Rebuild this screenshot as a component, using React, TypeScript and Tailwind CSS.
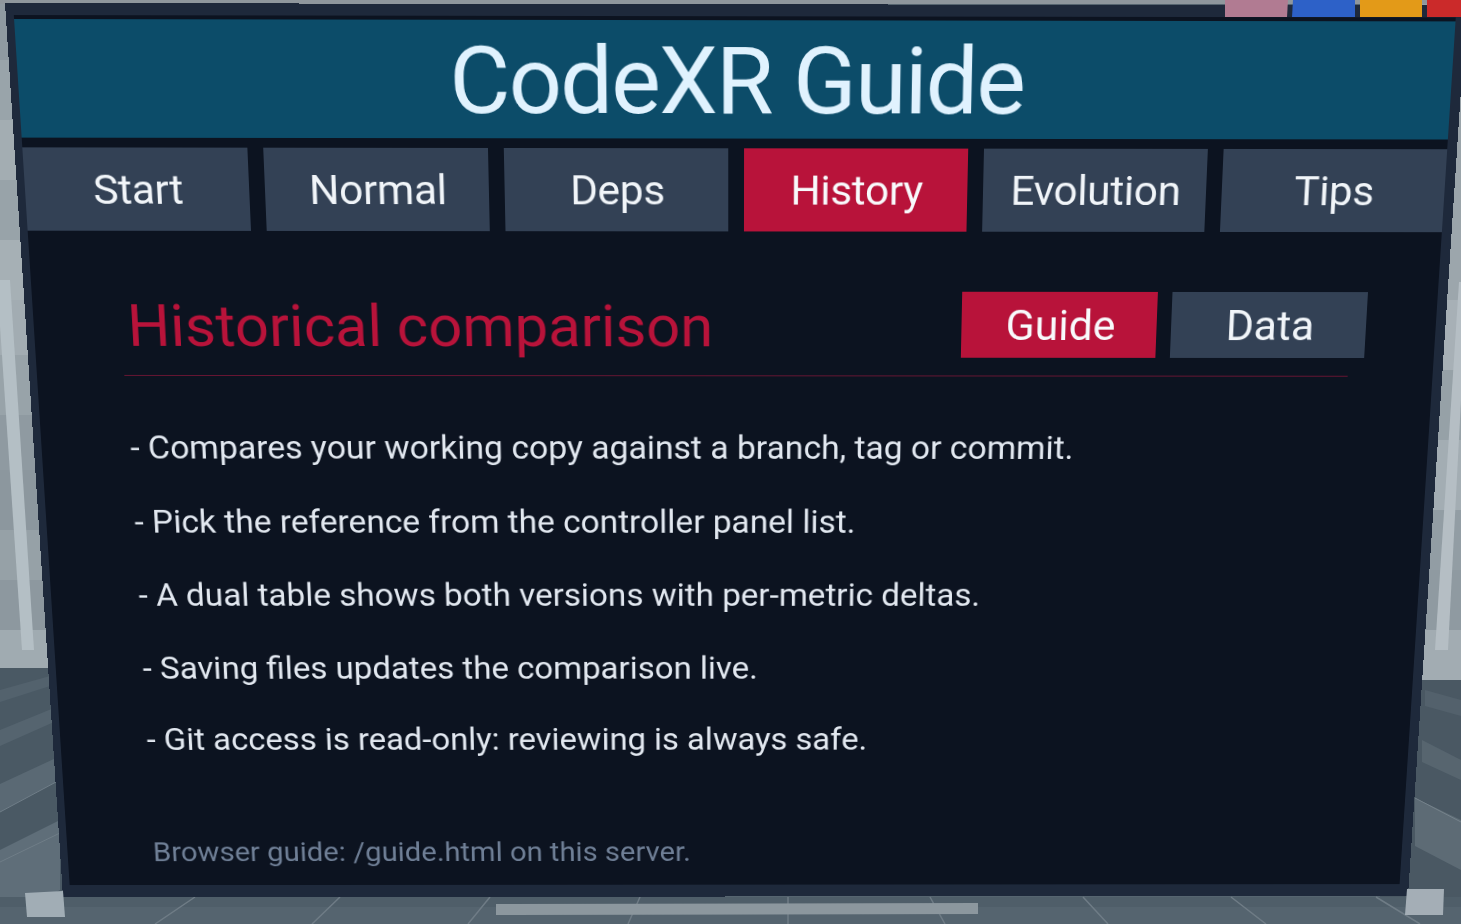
import React from "react";

const tabs = ["Start", "Normal", "Deps", "History", "Evolution", "Tips"];
const lines = [
  "- Compares your working copy against a branch, tag or commit.",
  "- Pick the reference from the controller panel list.",
  "- A dual table shows both versions with per-metric deltas.",
  "- Saving files updates the comparison live.",
  "- Git access is read-only: reviewing is always safe.",
];

function Scene() {
  const leftBands = [
    [0, 60, "#8f9aa1"], [60, 60, "#99a4aa"], [120, 60, "#a3adb2"], [180, 60, "#98a3a9"],
    [240, 60, "#a6b0b5"], [300, 55, "#a2acb2"], [355, 60, "#98a3a9"], [415, 55, "#8f9aa1"],
    [470, 60, "#8c979e"], [530, 50, "#96a1a7"], [580, 50, "#8d989f"], [630, 40, "#a0abb1"],
  ] as const;
  const rightBands = [
    [0, 110, "#98a2a8"], [110, 120, "#9aa4aa"], [230, 70, "#9ca6ac"], [300, 70, "#a7b0b6"],
    [370, 70, "#96a1a7"], [440, 70, "#a3adb3"], [510, 60, "#929da4"], [570, 60, "#8f9aa1"],
    [630, 50, "#a2acb2"],
  ] as const;
  return (
    <svg className="absolute inset-0" width="1461" height="924" viewBox="0 0 1461 924">
      <rect width="1461" height="924" fill="#566570" />
      {leftBands.map(([y, h, c]) => (
        <rect key={y} x="0" y={y} width="80" height={h} fill={c} />
      ))}
      {rightBands.map(([y, h, c]) => (
        <rect key={y} x="1380" y={y} width="81" height={h} fill={c} />
      ))}
      <rect x="0" y="0" width="1461" height="4" fill="#8f979d" />
      <polygon points="0,668 80,668 80,924 0,924" fill="#4a5964" />
      <polygon points="1380,680 1461,680 1461,924 1380,924" fill="#4a5863" />
      <polygon points="0,690 50,676 50,686 0,702" fill="#53626d" />
      <polygon points="0,730 54,708 54,722 0,746" fill="#55646f" />
      <polygon points="0,784 56,758 56,782 0,812" fill="#5a6974" />
      <polygon points="0,850 60,820 60,890 0,924" fill="#5f6e79" />
      <line x1="0" y1="812" x2="56" y2="782" stroke="#6f7d87" strokeWidth="1" />
      <line x1="0" y1="862" x2="60" y2="833" stroke="#6f7d87" strokeWidth="1" />
      <polygon points="1425,690 1461,700 1461,716 1425,706" fill="#53616c" />
      <polygon points="1422,740 1461,760 1461,780 1422,762" fill="#57656f" />
      <polygon points="1415,798 1461,820 1461,870 1415,846" fill="#5d6b75" />
      <line x1="1415" y1="798" x2="1461" y2="822" stroke="#75828b" strokeWidth="1" />
      <line x1="1405" y1="897" x2="1440" y2="924" stroke="#75828b" strokeWidth="1" />
      <polygon points="0,280 10,280 34,650 22,650 0,326" fill="#b4bfc5" />
      <polygon points="1459,282 1461,282 1461,400 1448,650 1435,650" fill="#b5bec4" />
      <rect x="0" y="897" width="1461" height="27" fill="#55646f" />
      <rect x="0" y="897" width="1461" height="10" fill="#4f5e69" />
      {[
        [195, 155], [340, 312], [490, 468], [640, 628], [788, 788], [930, 945], [1083, 1108], [1231, 1266], [1376, 1420],
      ].map(([a, b]) => (
        <line key={a} x1={a} y1="897" x2={b} y2="924" stroke="#6f7c86" strokeWidth="1.5" />
      ))}
      <polygon points="496,904 978,903 978,914 496,915" fill="#8c979e" />
    </svg>
  );
}

function Handles() {
  return (
    <svg className="absolute inset-0 pointer-events-none" width="1461" height="924" viewBox="0 0 1461 924">
      <polygon points="25,893 63,891 65,917 27,917" fill="#a1adb5" />
      <polygon points="1407,889 1444,889 1443,915 1405,915" fill="#a4aeb6" />
      <polygon points="1225,0 1288,0 1287,17 1225,17" fill="#b17b92" />
      <polygon points="1293,0 1355,0 1355,17 1292,17" fill="#2d61c8" />
      <polygon points="1360,0 1422,0 1422,17 1360,17" fill="#e39a18" />
      <polygon points="1427,0 1461,0 1461,17 1427,17" fill="#cb2a2a" />
    </svg>
  );
}

export default function App() {
  return (
    <div className="relative w-[1461px] h-[924px] overflow-hidden font-['Roboto',sans-serif]">
      <Scene />
      <div className="relative w-[1460px] h-[970px] origin-top-left [transform:matrix3d(1.00508,0.001727,0,0.000002759,0.06543,1.00191,0,0.00008948,0,0,1,0,5,3,0,1)] bg-[#0c1320] border-l-[8px] border-r-[10px] border-t-[12px] border-b-[14px] border-[#1e293b] flex flex-col">
        <div className="mt-1 h-[120px] bg-[#0c4c69] flex items-center justify-center">
          <h1 className="pt-[4px] pl-[2px] text-[94px] leading-none font-normal tracking-[-1.75px] text-[#e0f2fe]">CodeXR Guide</h1>
        </div>
        <div className="mt-[10px] grid grid-cols-6 gap-4">
          {tabs.map((t) => (
            <div
              key={t}
              className={
                t === "History"
                  ? "h-[86px] pl-[2px] flex items-center justify-center text-[43px] tracking-[-0.3px] text-[#f8fafc] bg-[#b8133a]"
                  : "h-[86px] pl-[2px] flex items-center justify-center text-[43px] tracking-[-0.3px] text-[#f1f5f9] bg-[#334155]"
              }
            >
              {t}
            </div>
          ))}
        </div>
        <div className="pl-[90px] flex flex-col">
          <div className="mt-[63px] w-[1280px] flex items-center justify-between">
            <h2 className="pl-[6px] pt-[5px] text-[61.4px] leading-none font-normal text-[#b8133a]">Historical comparison</h2>
            <div className="flex gap-[15px]">
              <div className="w-[201px] h-[70px] pl-[3px] pt-[1px] flex items-center justify-center text-[44px] text-[#f8fafc] bg-[#b8133a]">Guide</div>
              <div className="w-[201px] h-[70px] pl-[3px] pt-[1px] flex items-center justify-center text-[44px] text-[#f1f5f9] bg-[#334155]">Data</div>
            </div>
          </div>
          <div className="mt-[19px] w-[1264px] h-px bg-[#6b1533]" />
          <div className="mt-[57px] flex flex-col gap-[39.2px] pl-[2px]">
            {lines.map((l) => (
              <p key={l} className="text-[35px] leading-[42px] text-[#e2e8f0]">{l}</p>
            ))}
          </div>
          <p className="mt-[91px] pl-[2px] text-[31.5px] leading-[36px] text-[#6f7f96]">Browser guide: /guide.html on this server.</p>
        </div>
      </div>
      <Handles />
    </div>
  );
}
